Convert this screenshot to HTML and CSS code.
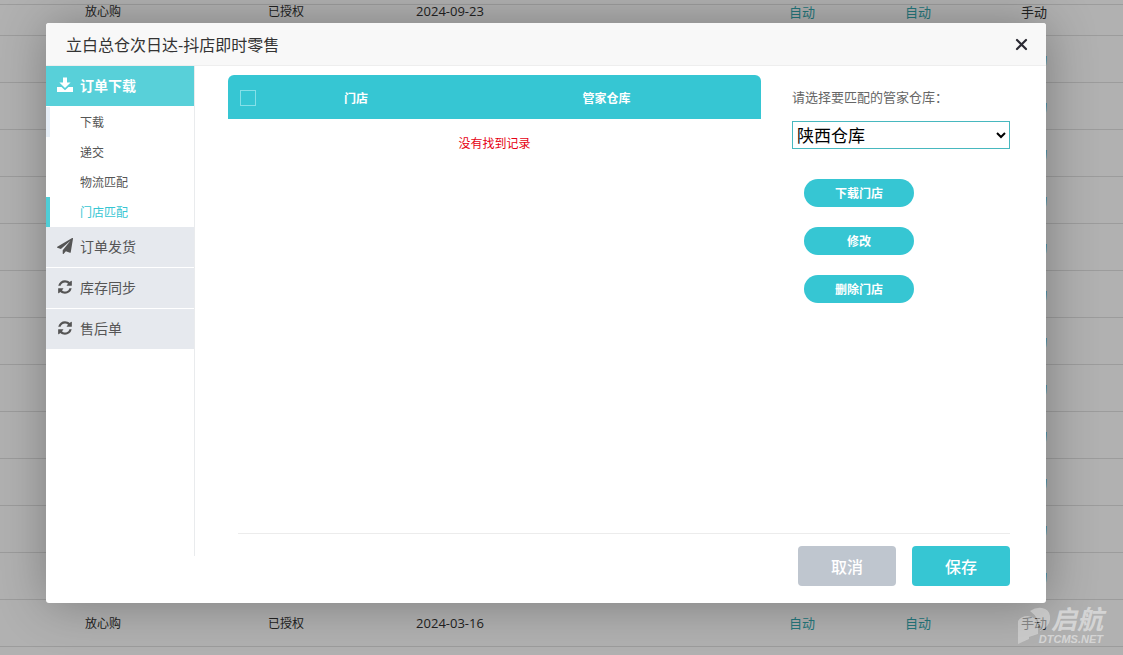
FILE: index.html
```html
<!DOCTYPE html>
<html lang="zh-CN">
<head>
<meta charset="utf-8">
<title>立白总仓次日达-抖店即时零售</title>
<link rel="stylesheet" href="styles.css">
</head>
<body>
<div class="page">
  <table class="shops">
    <colgroup><col class="c-platform"><col class="c-status"><col class="c-date"><col class="c-gap"><col class="c-mode"><col class="c-mode"><col class="c-mode"><col></colgroup>
    <tbody>
      <tr><td>放心购</td><td>已授权</td><td class="num">2024-09-23</td><td></td><td><a href="#">自动</a></td><td><a href="#">自动</a></td><td class="manual">手动</td><td></td></tr>
      <tr><td colspan="6"></td><td><a class="blue" href="#">手动</a></td><td></td></tr>
      <tr><td colspan="6"></td><td><a class="blue" href="#">手动</a></td><td></td></tr>
      <tr><td colspan="6"></td><td><a class="blue" href="#">手动</a></td><td></td></tr>
      <tr><td colspan="6"></td><td><a class="blue" href="#">手动</a></td><td></td></tr>
      <tr><td colspan="6"></td><td><a class="blue" href="#">手动</a></td><td></td></tr>
      <tr><td colspan="6"></td><td><a class="blue" href="#">手动</a></td><td></td></tr>
      <tr><td colspan="6"></td><td><a class="blue" href="#">手动</a></td><td></td></tr>
      <tr><td colspan="6"></td><td><a class="blue" href="#">手动</a></td><td></td></tr>
      <tr><td colspan="6"></td><td><a class="blue" href="#">手动</a></td><td></td></tr>
      <tr><td colspan="6"></td><td><a class="blue" href="#">手动</a></td><td></td></tr>
      <tr><td colspan="6"></td><td><a class="blue" href="#">手动</a></td><td></td></tr>
      <tr><td colspan="6"></td><td><a class="blue" href="#">手动</a></td><td></td></tr>
      <tr><td>放心购</td><td>已授权</td><td class="num">2024-03-16</td><td></td><td><a href="#">自动</a></td><td><a href="#">自动</a></td><td class="manual">手动</td><td></td></tr>
    </tbody>
  </table>
  <div class="head-line"></div>
</div>

<div class="dialog" role="dialog" aria-labelledby="dialog-title">
  <header class="dialog-head">
    <h1 class="dialog-title" id="dialog-title">立白总仓次日达-抖店即时零售</h1>
    <button class="close" type="button" aria-label="关闭">
      <svg width="13" height="13" viewBox="0 0 13 13"><path d="M2 2l9 9M11 2l-9 9" fill="none" stroke="#2b2a33" stroke-width="2.2" stroke-linecap="round"/></svg>
    </button>
  </header>
  <div class="dialog-body">
    <nav class="side">
      <a class="group open" href="#">
        <svg class="icon" viewBox="0 0 16 16"><path d="M6 .5h4v5h3.600L8 11 2.400 5.500H6z"/><path d="M0 10h4.500L8 13.300 11.500 10H16v5H0z"/></svg>
        <span>订单下载</span>
      </a>
      <div class="subs">
        <a class="sub first" href="#">下载</a>
        <a class="sub" href="#">递交</a>
        <a class="sub" href="#">物流匹配</a>
        <a class="sub active" href="#">门店匹配</a>
      </div>
      <a class="group" href="#">
        <svg class="icon wide" viewBox="0 0 1792 1792"><path d="M1764 11q33 24 27 64l-256 1536q-5 29-32 45-14 8-31 8-11 0-24-5l-453-185-242 295q-18 23-49 23-13 0-22-4-19-7-30.500-23.500t-11.500-36.500v-349l864-1059-1069 925-395-162q-37-14-40-55-2-40 32-59l1664-960q15-9 32-9 20 0 36 11z"/></svg>
        <span>订单发货</span>
      </a>
      <a class="group" href="#">
        <svg class="icon" viewBox="0 0 1536 1792"><path d="M1511 1056q0 5-1 7-64 268-268 434.500t-478 166.500q-146 0-282.500-55t-243.500-157l-129 129q-19 19-45 19t-45-19-19-45v-448q0-26 19-45t45-19h448q26 0 45 19t19 45-19 45l-137 137q71 66 161 102t187 36q134 0 250-65t186-179q11-17 53-117 8-23 30-23h192q13 0 22.500 9.500t9.500 22.500zm25-800v448q0 26-19 45t-45 19h-448q-26 0-45-19t-19-45 19-45l138-138q-148-137-349-137-134 0-250 65t-186 179q-11 17-53 117-8 23-30 23h-199q-13 0-22.500-9.500t-9.500-22.500v-7q65-268 270-434.500t480-166.500q146 0 284 55.500t245 156.500l130-129q19-19 45-19t45 19 19 45z"/></svg>
        <span>库存同步</span>
      </a>
      <a class="group" href="#">
        <svg class="icon" viewBox="0 0 1536 1792"><path d="M1511 1056q0 5-1 7-64 268-268 434.500t-478 166.500q-146 0-282.500-55t-243.500-157l-129 129q-19 19-45 19t-45-19-19-45v-448q0-26 19-45t45-19h448q26 0 45 19t19 45-19 45l-137 137q71 66 161 102t187 36q134 0 250-65t186-179q11-17 53-117 8-23 30-23h192q13 0 22.500 9.500t9.500 22.500zm25-800v448q0 26-19 45t-45 19h-448q-26 0-45-19t-19-45 19-45l138-138q-148-137-349-137-134 0-250 65t-186 179q-11 17-53 117-8 23-30 23h-199q-13 0-22.500-9.500t-9.500-22.500v-7q65-268 270-434.500t480-166.500q146 0 284 55.500t245 156.500l130-129q19-19 45-19t45 19 19 45z"/></svg>
        <span>售后单</span>
      </a>
    </nav>
    <div class="main">
      <div class="panes">
        <div class="list">
          <table class="match">
            <thead>
              <tr><th class="m-check"><input class="check" type="checkbox" aria-label="全选"></th><th class="m-store">门店</th><th>管家仓库</th></tr>
            </thead>
            <tbody><tr><td class="empty" colspan="3">没有找到记录</td></tr></tbody>
          </table>
        </div>
        <form class="panel">
          <label class="label" for="warehouse">请选择要匹配的管家仓库：</label>
          <select class="select" id="warehouse"><option>陕西仓库</option></select>
          <div class="actions">
            <button class="pill" type="button">下载门店</button>
            <button class="pill" type="button">修改</button>
            <button class="pill" type="button">删除门店</button>
          </div>
        </form>
      </div>
      <footer class="foot">
        <button class="btn cancel" type="button">取消</button>
        <button class="btn save" type="button">保存</button>
      </footer>
    </div>
  </div>
</div>

<div class="mark">
  <svg class="mark-logo" viewBox="0 0 34 38" width="34" height="38"><path d="M13 4Q19 0 25 1q7 1 8 8 1 8-6 13l-4 2Q23 11 13 4z"/><path d="M1 14q3-5 10-5 9 1 10 9v9l-9 3v2L1 37z"/></svg>
  <div class="mark-text"><span class="mark-name">启航</span><span class="mark-site">DTCMS.NET</span></div>
</div>
</body>
</html>
```
FILE: styles.css
```css
* { box-sizing: border-box; }

body {
  margin: 0;
  height: 100vh;
  overflow: hidden;
  background: #b1b1b1;
  color: #222;
  font-family: "Open Sans", "Noto Sans CJK SC", sans-serif;
  font-size: 12px;
}

a { text-decoration: none; color: inherit; }
button, select, input { font-family: inherit; margin: 0; }
table { border-collapse: collapse; table-layout: fixed; width: 100%; }

/* Shop list behind the dialog, scrolled part way through its first row */
.page { position: relative; }
.shops { margin-top: -12px; }
.shops td {
  height: 47px;
  padding: 0;
  border-bottom: 1px solid #9c9c9c;
  text-align: center;
}
.shops a { color: #24777c; font-size: 13px; }
.shops a.blue { color: #1c5a80; }
.shops .num, .shops .manual { font-size: 13px; }
.c-platform { width: 206px; }
.c-status { width: 160px; }
.c-date { width: 168px; }
.c-gap { width: 210px; }
.c-mode { width: 116px; }
.head-line {
  position: absolute;
  top: 16px;
  left: 0;
  right: 0;
  border-top: 1px solid #9c9c9c;
}

.dialog {
  position: absolute;
  top: 23px;
  left: 46px;
  right: 77px;
  border-radius: 3px;
  background: #fff;
  box-shadow: 1px 1px 50px rgba(0, 0, 0, .3);
}
.dialog-head {
  display: flex;
  align-items: center;
  justify-content: space-between;
  height: 43px;
  padding: 0 16px 0 20px;
  border-bottom: 1px solid #eee;
  border-radius: 3px 3px 0 0;
  background: #f8f8f8;
}
.dialog-title { margin: 0; font-size: 16px; font-weight: 400; color: #333; }
.close {
  display: flex;
  padding: 2px;
  border: 0;
  background: none;
}
.dialog-body { display: flex; min-height: 537px; }

.side {
  width: 149px;
  margin-bottom: 47px;
  border-right: 1px solid #e9ebed;
}
.group {
  display: flex;
  align-items: center;
  gap: 7px;
  height: 40px;
  margin-bottom: 1px;
  padding: 0 0 2px 11px;
  background: #e6e9ee;
  color: #555;
  font-size: 14px;
}
.group.open { background: #58d0d9; color: #fff; font-weight: 700; }
.icon { width: 16px; height: 16px; fill: currentColor; }
.sub {
  display: block;
  height: 30px;
  padding: 1px 0 0 30px;
  border-left: 4px solid #fcfdfe;
  color: #555;
  line-height: 30px;
}
.sub.first { border-left-color: #e6eef7; }
.sub.active { border-left-color: #4fcdd6; color: #36c6d3; }

.main {
  display: flex;
  flex: 1;
  flex-direction: column;
  padding: 9px 36px 17px 33px;
}
.panes { display: flex; flex: 1; gap: 31px; }
.list { flex: 1; }
.match th {
  height: 44px;
  padding: 1px 0 0;
  background: #36c6d3;
  color: #fff;
  text-align: center;
}
.match th:first-child { border-radius: 6px 0 0; padding-left: 12px; }
.match th:last-child { border-radius: 0 6px 0 0; }
.m-check { width: 6%; }
.m-store { width: 36%; }
.check {
  display: block;
  width: 16px;
  height: 16px;
  appearance: none;
  border: 1px solid #85e0e8;
}
.empty { height: 48px; padding: 0; color: #e60012; text-align: center; }

.panel { width: 218px; padding-top: 12px; }
.label { display: block; color: #666; font-size: 13px; line-height: 20px; }
.select {
  width: 100%;
  height: 28px;
  margin-top: 14px;
  padding: 0;
  border: 1px solid #48b8bf;
  border-radius: 0;
  background: #fff;
  color: #000;
  font-size: 17px;
}
.actions {
  display: flex;
  flex-direction: column;
  gap: 20px;
  margin: 30px 0 0 12px;
}
.pill {
  width: 110px;
  height: 28px;
  padding: 0;
  border: 0;
  border-radius: 14px;
  background: #36c6d3;
  color: #fff;
  font-size: 12px;
  font-weight: 700;
}

.foot {
  display: flex;
  justify-content: flex-end;
  gap: 16px;
  margin-left: 10px;
  padding-top: 12px;
  border-top: 1px solid #ececec;
}
.btn {
  width: 98px;
  height: 40px;
  padding: 0;
  border: 0;
  border-radius: 4px;
  color: #fff;
  font-size: 16px;
  font-weight: 500;
}
.cancel { background: #bfc6cf; }
.save { background: #36c6d3; }

/* Translucent site mark over the lower right corner */
.mark {
  position: absolute;
  right: 20px;
  bottom: 10px;
  display: flex;
  align-items: flex-end;
  color: #e4e4e4;
  opacity: .7;
  pointer-events: none;
}
.mark-logo { fill: currentColor; fill-opacity: .7; margin-right: -12px; }
.mark-text {
  display: flex;
  flex-direction: column;
  align-items: flex-end;
  font-style: italic;
  font-weight: 700;
}
.mark-name { font-size: 26px; line-height: 28px; }
.mark-site { font-family: "Liberation Sans", sans-serif; font-size: 11px; line-height: 12px; }
```
